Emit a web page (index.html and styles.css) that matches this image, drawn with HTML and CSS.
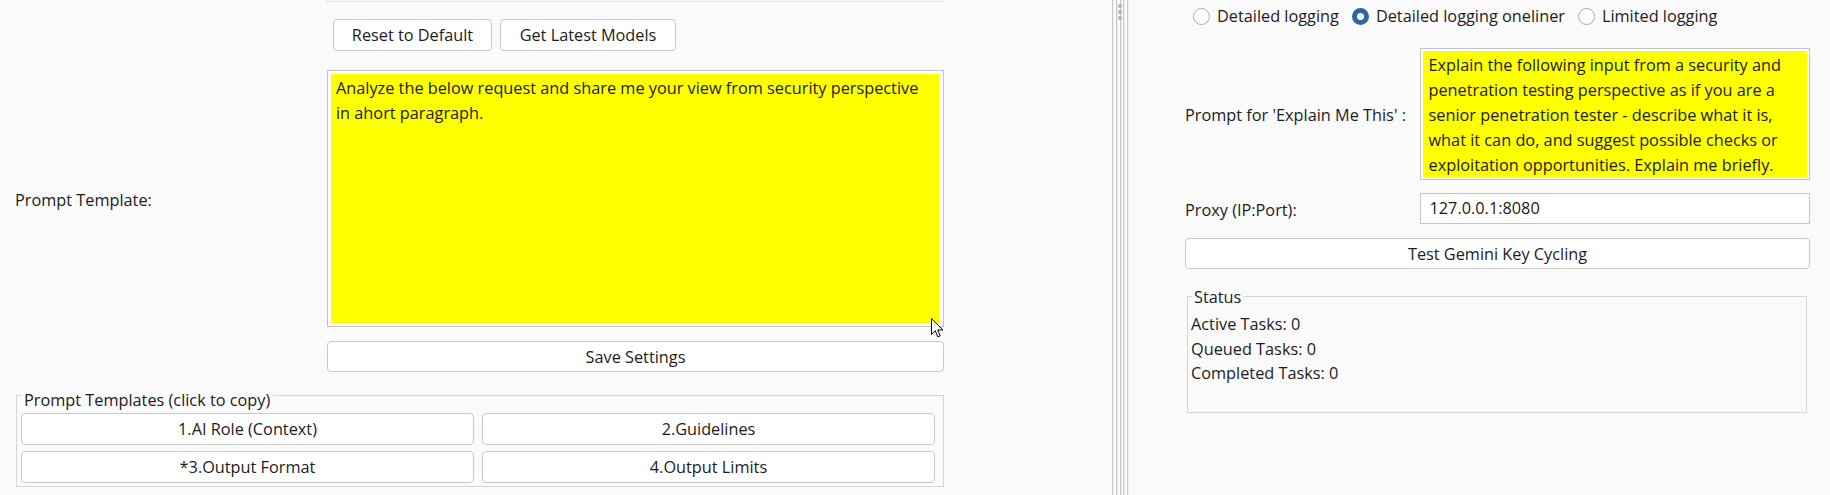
FILE: index.html
```html
<!DOCTYPE html>
<html lang="en">
<head>
<meta charset="utf-8">
<title>Settings</title>
<link rel="stylesheet" href="styles.css">
</head>
<body>
<div class="app">
  <div class="left">
    <div class="topline"></div>
    <div class="btnrow">
      <button class="btn btn-reset">Reset to Default</button>
      <button class="btn btn-models">Get Latest Models</button>
    </div>
    <div class="prompt-row">
      <div class="prompt-label">Prompt Template:</div>
      <div class="ta main-ta">
        <div class="ta-inner main-inner">Analyze the below request and share me your view from security perspective<br>in ahort paragraph.</div>
      </div>
    </div>
    <div class="save-row"><button class="btn btn-save">Save Settings</button></div>
    <fieldset class="group templates">
      <legend class="group-title tpl-title">Prompt Templates (click to copy)</legend>
      <div class="tpl-grid">
        <button class="btn tpl">1.AI Role (Context)</button>
        <button class="btn tpl">2.Guidelines</button>
        <button class="btn tpl">*3.Output Format</button>
        <button class="btn tpl">4.Output Limits</button>
      </div>
    </fieldset>
    <svg class="cursor" width="13" height="20" viewBox="0 0 13 20">
      <path d="M0.5 0.5 L0.5 16.5 L4.3 12.8 L6.8 18.8 L9.2 17.8 L6.7 12 L11.8 12 Z" fill="#fff" stroke="#000" stroke-width="1" stroke-linejoin="miter"/>
    </svg>
  </div>
  <div class="divider">
    <span class="dline"></span><span class="dline"></span><span class="dline mid"></span><span class="dline"></span><span class="dline"></span>
    <div class="grip"><i></i><i></i><i></i></div>
  </div>
  <div class="right">
    <div class="radio-row">
      <label class="radio"><span class="rcircle"></span><span>Detailed logging</span></label>
      <label class="radio"><span class="rcircle on"></span><span>Detailed logging oneliner</span></label>
      <label class="radio"><span class="rcircle"></span><span>Limited logging</span></label>
    </div>
    <div class="form-row explain-row">
      <div class="flabel">Prompt for 'Explain Me This' :</div>
      <div class="ta side-ta">
        <div class="ta-inner side-inner">Explain the following input from a security and<br>penetration testing perspective as if you are a<br>senior penetration tester - describe what it is,<br>what it can do, and suggest possible checks or<br>exploitation opportunities. Explain me briefly.</div>
      </div>
    </div>
    <div class="form-row proxy-row">
      <div class="flabel">Proxy (IP:Port):</div>
      <div class="field">127.0.0.1:8080</div>
    </div>
    <button class="btn btn-test">Test Gemini Key Cycling</button>
    <fieldset class="group status">
      <legend class="group-title status-title">Status</legend>
      <div class="status-line">Active Tasks: 0</div>
      <div class="status-line">Queued Tasks: 0</div>
      <div class="status-line">Completed Tasks: 0</div>
    </fieldset>
  </div>
</div>
</body>
</html>
```
FILE: styles.css
```css
* { box-sizing: border-box; }
html, body {
  margin: 0;
  padding: 0;
  background: #fafafa;
}
body {
  font-family: "Open Sans", "Noto Sans", sans-serif;
  font-size: 16.3px;
  color: #1c1c1c;
  width: 1830px;
  height: 495px;
  overflow: hidden;
}
.app {
  display: flex;
  height: 495px;
}
.left {
  width: 1111px;
  flex-shrink: 0;
  position: relative;
}
.topline {
  margin: 1px 0 0 326px;
  width: 618px;
  height: 1px;
  background: #dedede;
}
.btn {
  font: inherit;
  color: inherit;
  background: #ffffff;
  border: 1px solid #c9c9c9;
  border-radius: 4px;
  padding: 0;
  height: 32px;
  line-height: 30px;
  text-align: center;
  white-space: nowrap;
}
.btnrow {
  display: flex;
  gap: 8px;
  margin: 17px 0 0 333px;
}
.btn-reset { width: 159px; }
.btn-models { width: 176px; }
.prompt-row {
  display: flex;
  align-items: center;
  margin-top: 19px;
}
.prompt-label {
  width: 327px;
  padding-left: 15px;
  padding-top: 3px;
}
.ta {
  border: 1px solid #c4c4c4;
  background: #ffffff;
  padding: 3px;
}
.ta-inner {
  background: #ffff00;
  height: 100%;
  white-space: nowrap;
}
.main-ta {
  width: 617px;
  height: 257px;
}
.main-inner {
  padding: 2px 0 0 5px;
  line-height: 24.5px;
}
.save-row {
  margin-top: 14px;
  padding-left: 327px;
}
.btn-save {
  width: 617px;
  height: 31px;
  line-height: 30px;
}
.group {
  border: 1px solid #d6d6d6;
  margin: 0;
  min-width: 0;
}
.group-title {
  line-height: 18px;
  white-space: nowrap;
}
.templates {
  margin: 9px 0 0 16px;
  width: 928px;
  padding: 4px 8px 3px 4px;
}
.tpl-title {
  padding: 10px 3px 0 3px;
}
.tpl-grid {
  display: grid;
  grid-template-columns: 453px 453px;
  column-gap: 8px;
  row-gap: 6px;
}
.tpl { width: 453px; }
.cursor {
  position: absolute;
  left: 931px;
  top: 318px;
}
.divider {
  width: 17px;
  flex-shrink: 0;
  display: flex;
  position: relative;
  padding-left: 1px;
  gap: 2.75px;
}
.dline {
  width: 1px;
  height: 100%;
  background: #c9c9c9;
  box-shadow: 1px 0 0 #ececec;
}
.grip {
  position: absolute;
  left: 7px;
  top: 4px;
  display: flex;
  flex-direction: column;
  gap: 2.5px;
}
.grip i {
  display: block;
  width: 3.5px;
  height: 3.5px;
  border-radius: 50%;
  background: #b4b4b4;
}
.right {
  flex: 1;
  padding: 0 20px 0 57px;
}
.radio-row {
  display: flex;
  align-items: center;
  gap: 13px;
  margin: 4px 0 0 8px;
  height: 24px;
}
.radio {
  display: flex;
  align-items: center;
  gap: 7px;
}
.rcircle {
  width: 17px;
  height: 17px;
  border-radius: 50%;
  border: 1px solid #a8a8a8;
  background: #ffffff;
  display: inline-block;
  flex-shrink: 0;
}
.rcircle.on {
  border: 5px solid #2b66a6;
  background: #ffffff;
}
.form-row {
  display: flex;
  align-items: center;
}
.flabel {
  width: 234.5px;
  flex-shrink: 0;
  padding-top: 2px;
}
.explain-row { margin-top: 20px; }
.side-ta {
  width: 390px;
  height: 132px;
  padding: 2px;
}
.side-inner {
  padding: 2px 0 0 6px;
  line-height: 25px;
}
.proxy-row { margin-top: 13px; }
.field {
  width: 390px;
  height: 31px;
  border: 1px solid #c4c4c4;
  background: #ffffff;
  padding-left: 9px;
  line-height: 29px;
}
.btn-test {
  display: block;
  width: 625px;
  height: 31px;
  line-height: 31px;
  margin-top: 14px;
}
.status {
  margin: 17px 0 0 2px;
  width: 620px;
  padding: 6px 3px 26px 3px;
}
.status-title {
  padding: 2px 2px 0 2px;
  margin-left: 1px;
}
.status-line {
  line-height: 24.5px;
}
```
